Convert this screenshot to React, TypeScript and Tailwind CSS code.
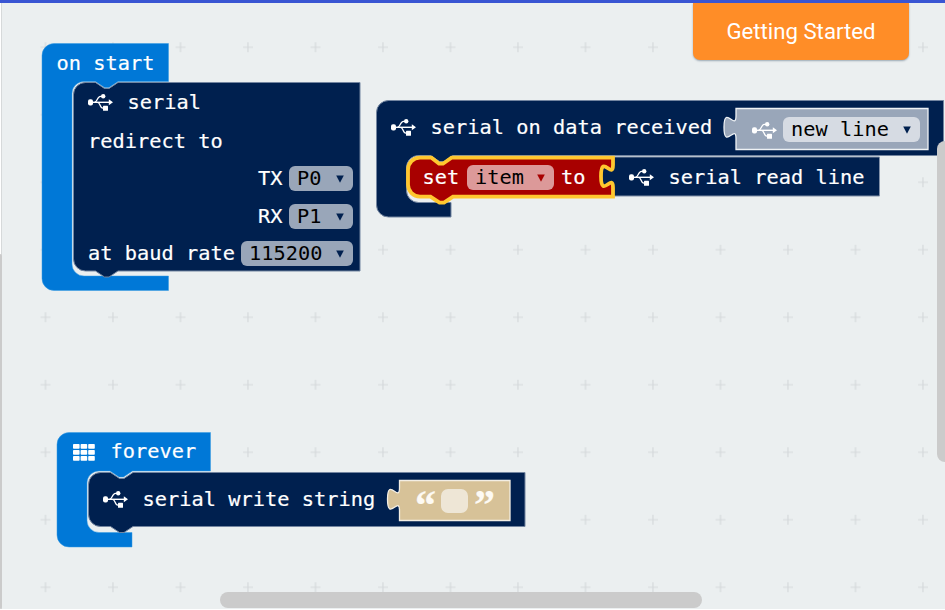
import type { ReactNode } from "react";

const NAVY = "#00204f";
const BLUE = "#0078d7";
const MONO = "font-['DejaVu_Sans_Mono',monospace] text-[20.3px] leading-6 tracking-[0.04px] whitespace-pre [-webkit-text-stroke:0.2px]";

type Rect = { x: number; y: number; w: number; h: number };

function Block({ rect, path, fill, stroke, strokeWidth = 1, children }: {
  rect: Rect; path: string; fill: string; stroke: string; strokeWidth?: number; children?: ReactNode;
}) {
  return (
    <div className="absolute" style={{ left: rect.x, top: rect.y, width: rect.w, height: rect.h }}>
      <svg
        className="absolute inset-0 overflow-visible"
        width={rect.w}
        height={rect.h}
        viewBox={`${rect.x} ${rect.y} ${rect.w} ${rect.h}`}
      >
        <path d={path} fill={fill} stroke={stroke} strokeWidth={strokeWidth} />
      </svg>
      <div className={`relative text-white ${MONO}`}>{children}</div>
    </div>
  );
}

function Usb() {
  return (
    <svg className="mt-px shrink-0" width="25" height="17" viewBox="0 0 25 17" fill="white">
      <rect x="0" y="5.200" width="5" height="6.200" rx="2" />
      <path d="M3 8.300H22" stroke="white" strokeWidth="1.400" />
      <path d="M6.500 8.300C9.500 8.300 9 2.300 12.500 2.300H15M9.500 8.300C12.500 8.300 11.500 14.200 15 14.200H16" fill="none" stroke="white" strokeWidth="1.300" />
      <circle cx="15.200" cy="2.300" r="2.200" />
      <rect x="15" y="11.800" width="5" height="5" rx=".6" />
      <path d="M20.800 5.300L25 8.300L20.800 11.300Z" />
    </svg>
  );
}

function Field({ text, className, arrow }: { text: string; className: string; arrow: string }) {
  return (
    <span className={`flex h-[25px] shrink-0 items-center justify-between rounded-[6px] pr-[9.5px] pl-2 text-black [-webkit-text-stroke:0px] ${className}`}>
      <span className="-mt-px">{text}</span>
      <svg width="8" height="8" viewBox="0 0 8 8"><path d="M.2 .5H7.800L4 7.800Z" fill={arrow} /></svg>
    </span>
  );
}

const START = "M54 43.5H168.5V81.5H118l-9 6h-4.5l-9-6H84a12 12 0 0 0-12 12V264a12 12 0 0 0 12 12H168.5V290.500H54a12 12 0 0 1-12-12V55.500a12 12 0 0 1 12-12Z";
const REDIRECT = "M85.500 82.500H95.500l9 6h4.500l9-6H360V271H118l-9 6h-4.500l-9-6H85.500a12 12 0 0 1-12-12V94.500a12 12 0 0 1 12-12Z";
const RECEIVED = "M388.500 100.500H943.500V155.500H453l-9 6h-4.500l-9-6H418.500a12 12 0 0 0-12 12V190.500a12 12 0 0 0 12 12H451V217H388.500a12 12 0 0 1-12-12V112.500a12 12 0 0 1 12-12Z";
const NEWLINE = "M736 108.500H928V149.500H736V138.500c0-15-12 12-12-11.250s12 3.750 12-11.250Z";
const READ = "M613.500 157H879.500V196H613.500V187.500c0-15-12 12-12-11.250s12 3.750 12-11.250Z";
const SET = "M420 157.700H431.500l7.500 6h4l8.500-6H613V165c0 15-12-12-12 11.250s12-3.750 12 11.250V196.600H453l-9 6h-4.500l-9-6H420a12 12 0 0 1-12-12V169.700a12 12 0 0 1 12-12Z";
const FOREVER = "M69 432.500H210.500V471H132.500l-9 6h-4.500l-9-6H99a12 12 0 0 0-12 12V520.500a12 12 0 0 0 12 12H132V547H69a12 12 0 0 1-12-12V444.500a12 12 0 0 1 12-12Z";
const WRITE = "M100.500 472.500H110.500l9 6h4.500l9-6H525V526.500H133l-9 6h-4.500l-9-6H100.500a12 12 0 0 1-12-12V484.500a12 12 0 0 1 12-12Z";
const STRING = "M399.500 480.500H510V520.500H399.500V510.500c0-15-12 12-12-11.250s12 3.750 12-11.250Z";

function Crosses() {
  return (
    <svg className="absolute inset-0" width="945" height="610">
      <defs>
        <pattern id="crosses" x="11.800" y="13.500" width="67.500" height="67.500" patternUnits="userSpaceOnUse">
          <path d="M28.700 33.750h10M33.700 28.750v10" stroke="#d5d9db" strokeWidth="1.200" />
        </pattern>
      </defs>
      <rect width="945" height="610" fill="url(#crosses)" />
    </svg>
  );
}

export default function App() {
  return (
    <main className="relative h-[610px] w-[945px] overflow-hidden border-t-[3px] border-[#3955d3] bg-[#ebeff0]">
      <div className="absolute -top-[3px] left-0 h-[610px] w-[945px]">
        <Crosses />
        <div className="absolute top-[3px] left-0 h-[606px] w-[2px] border-l border-white bg-[#d6d9da]" />
        <div className="absolute top-[254px] left-0 h-[355px] w-[2px] rounded-r-full bg-[#cbcbcb]" />

        <Block rect={{ x: 42, y: 43, w: 127, h: 248 }} path={START} fill={BLUE} stroke="#379ae2" strokeWidth={0.5}>
          <div className="pt-2 pl-[14.5px]">on start</div>
        </Block>
        <Block rect={{ x: 73, y: 82, w: 288, h: 195 }} path={REDIRECT} fill={NAVY} stroke="#7385a0">
          <div className="flex items-center pt-2 pl-[15px]"><Usb /><span className="pl-[14.5px]">serial</span></div>
          <div className="pt-[15px] pl-[15px]">redirect to</div>
          <div className="flex items-center justify-end gap-[6.5px] pt-[13px] pr-2">
            <span className="-mt-[2px]">TX</span><Field text="P0" className="w-16 bg-[#99a6b9]" arrow={NAVY} />
          </div>
          <div className="flex items-center justify-end gap-[6.5px] pt-[13px] pr-2">
            <span className="-mt-[2px]">RX</span><Field text="P1" className="w-16 bg-[#99a6b9]" arrow={NAVY} />
          </div>
          <div className="flex items-center justify-between pt-3 pr-2 pl-[15px]">
            <span className="-mt-px">at baud rate</span><Field text="115200" className="w-28 bg-[#99a6b9]" arrow={NAVY} />
          </div>
        </Block>

        <Block rect={{ x: 376, y: 100, w: 568, h: 117 }} path={RECEIVED} fill={NAVY} stroke="#7385a0">
          <div className="flex items-center pt-[15px] pl-[15px]"><Usb /><span className="pl-[14.5px]">serial on data received</span></div>
        </Block>
        <Block rect={{ x: 724, y: 108, w: 205, h: 42 }} path={NEWLINE} fill="#99a6b9" stroke="#eef2f5" strokeWidth={1.3}>
          <div className="flex items-center gap-[6px] pt-[9px] pl-[28px]">
            <Usb /><Field text="new line" className="w-[137px] bg-[#d6dbe3]" arrow={NAVY} />
          </div>
        </Block>
        <Block rect={{ x: 602, y: 157, w: 278, h: 39 }} path={READ} fill={NAVY} stroke="#8190a8">
          <div className="flex items-center pt-2 pl-[27px]"><Usb /><span className="pl-[14.5px]">serial read line</span></div>
        </Block>
        <Block rect={{ x: 406, y: 156, w: 209, h: 49 }} path={SET} fill="#a80000" stroke="#ffc72f" strokeWidth={3.8}>
          <div className="flex items-center pt-[9px] pl-[16.5px]">
            <span className="-mt-[2px] w-[44.5px]">set</span>
            <Field text="item" className="w-[87px] bg-[#dc9999]" arrow="#a80000" />
            <span className="-mt-[2px] pl-[7px]">to</span>
          </div>
        </Block>

        <Block rect={{ x: 57, y: 432, w: 154, h: 115 }} path={FOREVER} fill={BLUE} stroke="#379ae2" strokeWidth={0.5}>
          <div className="flex items-center pt-[7px] pl-4">
            <svg className="mt-[2px]" width="22" height="17" viewBox="0 0 22 17" fill="white">
              {[0, 6, 12].map((y) => [0, 7.600, 15.200].map((x) => (
                <rect key={`${x}-${y}`} x={x} y={y} width="6.600" height="4.800" rx=".8" />
              )))}
            </svg>
            <span className="pl-[15.5px]">forever</span>
          </div>
        </Block>
        <Block rect={{ x: 88, y: 472, w: 438, h: 61 }} path={WRITE} fill={NAVY} stroke="#7385a0">
          <div className="flex items-center pt-[15px] pl-[15px]"><Usb /><span className="pl-[14.5px]">serial write string</span></div>
        </Block>
        <Block rect={{ x: 387, y: 480, w: 124, h: 41 }} path={STRING} fill="#d7c298" stroke="#f3eee4" strokeWidth={1.3}>
          <div className="flex h-[41px] items-center pl-7 font-['Liberation_Serif',serif] text-[42px] font-bold text-[#fdfaf4]">
            <span className="h-6 w-[26px] leading-[33px]">“</span>
            <span className="h-6 w-[27px] rounded-[7px] bg-[#eee6d6]" />
            <span className="ml-[6px] h-6 leading-[33px]">”</span>
          </div>
        </Block>

        <button className="absolute top-[3px] left-[693px] h-[57px] w-[216px] rounded-b-[7px] bg-[#ff8d27] font-[Roboto,sans-serif] text-[22.2px] text-white shadow-[0_1px_2px_#9aa8b4]">
          Getting Started
        </button>
        <div className="absolute top-[592px] left-[220px] h-4 w-[482px] rounded-full bg-[#cbcbcb]" />
        <div className="absolute top-[141px] left-[937px] h-[321px] w-4 rounded-full bg-[#cbcbcb]" />
        <div className="absolute top-[609px] left-0 h-px w-full bg-white" />
      </div>
    </main>
  );
}
